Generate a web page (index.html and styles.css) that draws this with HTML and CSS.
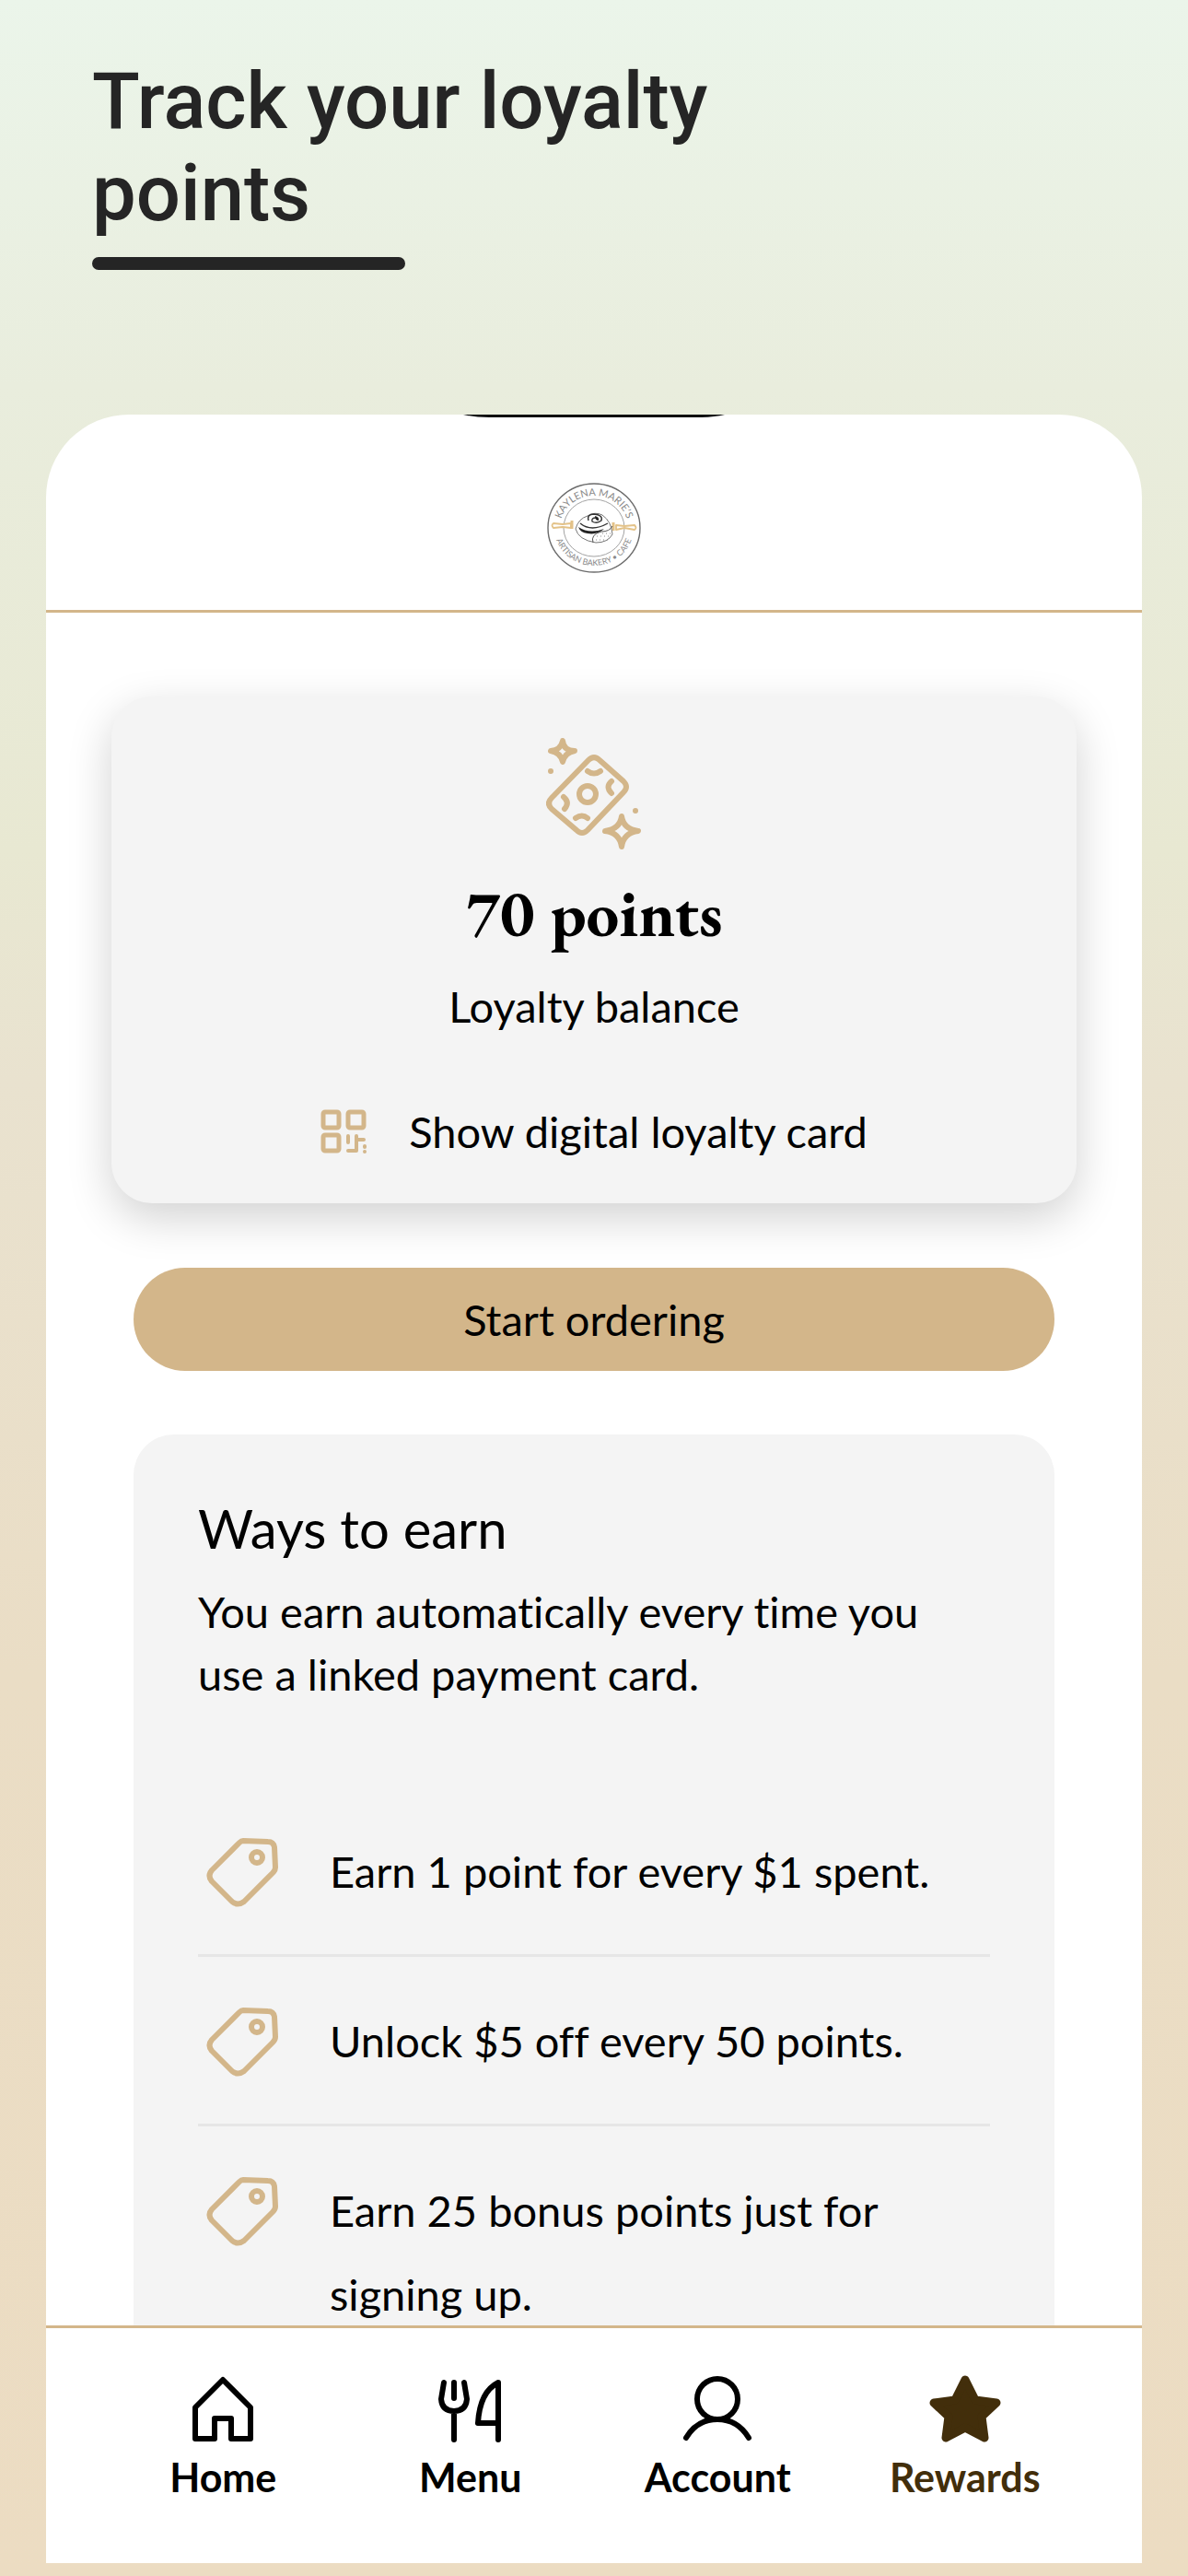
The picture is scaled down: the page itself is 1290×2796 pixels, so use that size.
FILE: index.html
```html
<!DOCTYPE html>
<html lang="en">
<head>
    <meta charset="utf-8" />
    <meta name="viewport" content="width=device-width, initial-scale=1" />
    <title>Track your loyalty points</title>
    <link rel="stylesheet" href="styles.css">
</head>

<body>
    <header class="promo">
        <h1>Track your loyalty<br />points</h1>
        <div class="underline"></div>
    </header>

    <div class="phone">
        <svg class="notch" viewBox="0 0 284 4" aria-hidden="true">
            <path d="M0 0H284Q272 3 256 3H28Q12 3 0 0Z" fill="#0b0c0e" />
        </svg>

        <div class="app-bar">
            <svg class="logo" viewBox="0 0 102 98" role="img" aria-label="Kaylena Marie's Artisan Bakery and Cafe">
                <defs>
                    <path id="arc-top" d="M14 49A37 35 0 0 1 88 49" />
                    <path id="arc-bottom" d="M8 49A43 41 0 0 0 94 49" />
                </defs>
                <ellipse cx="51" cy="49" rx="50" ry="48" fill="none" stroke="#6b6b6b" stroke-width="1.4" />
                <ellipse cx="51" cy="49" rx="33" ry="31" fill="none" stroke="#a3a3a3" />
                <text class="logo-text logo-name"><textPath href="#arc-top" startOffset="50%">KAYLENA MARIE’S</textPath></text>
                <text class="logo-text logo-tag"><textPath href="#arc-bottom" startOffset="50%">ARTISAN BAKERY • CAFE</textPath></text>
                <!-- rolling pin -->
                <g fill="#fff" stroke="#e3c288" stroke-width="1.8" stroke-linejoin="round">
                    <path d="M7 44Q4 46 7 49L17 48L26 49V44L17 45Z" />
                    <path d="M95 46Q98 49 95 51L84 49L75 51V46L84 47Z" />
                    <path d="M27 41V50M72 43V52" stroke-width="3" />
                </g>
                <!-- cinnamon roll -->
                <path d="M31 50Q34 39 44 36Q52 31 60 35Q70 42 71 56Q66 65 53 65Q34 62 31 50Z" fill="#fff" stroke="#777" />
                <path d="M36 44Q48 54 66 44M45 41Q43 34 51 34Q61 35 59 41Q54 45 49 42Q48 38 53 38" fill="none" stroke="#333" stroke-width="1.4" />
                <path d="M34 48Q46 56 62 50Q54 57 44 55Q36 54 34 48ZM52 36Q57 37 56 41Q52 41 52 36Z" fill="#222" />
                <path d="M50 65Q47 56 59 53Q68 53 71 47" fill="none" stroke="#555" />
                <path d="M54 58H69M53 62H66M60 55H70" stroke="#888" stroke-dasharray="1 3" />
            </svg>
        </div>

        <main class="content">
            <section class="balance">
                <svg class="reward-icon" viewBox="0 0 104 124" fill="none" stroke="#d3b68a" stroke-width="6" stroke-linecap="round" stroke-linejoin="round" aria-hidden="true">
                    <path d="M46 25Q52 19 58 25L84 48Q90 54 84 60L45 101Q39 107 33 101L6 78Q0 72 6 66Z" />
                    <circle cx="45" cy="62" r="9" />
                    <path d="M45 37Q52 42 59 37M71 48Q64 54 71 61M19 65Q26 71 20 78M32 88Q39 83 45 88" />
                    <path d="M18 4Q19 15 31 15Q20 17 18 27Q16 17 5 15Q16 14 18 4Z" />
                    <path d="M82 86Q84 100 100 102Q84 104 82 119Q80 104 64 102Q80 100 82 86Z" />
                    <circle cx="5" cy="37" r="3" fill="#d3b68a" stroke="none" />
                    <circle cx="97" cy="80" r="3" fill="#d3b68a" stroke="none" />
                </svg>
                <h2>70 points</h2>
                <p>Loyalty balance</p>
                <button type="button" class="show-card">
                    <svg class="qr-icon" viewBox="0 0 50 48" fill="none" stroke="#d3b68a" stroke-width="5" stroke-linejoin="round" stroke-linecap="round" aria-hidden="true">
                        <rect x="3" y="3" width="17" height="17" rx="2" />
                        <rect x="30" y="3" width="17" height="17" rx="2" />
                        <rect x="3" y="28" width="17" height="17" rx="2" />
                        <path d="M30 29V36M39 29V45H30M39 33H47M48 40V41M48 46V46" stroke-width="4" />
                    </svg>
                    Show digital loyalty card
                </button>
            </section>

            <button type="button" class="order">Start ordering</button>

            <section class="ways">
                <h2>Ways to earn</h2>
                <p>You earn automatically every time you use a linked payment card.</p>
                <ul>
                    <li>
                        <svg class="tag-icon" viewBox="0 0 78 76" aria-hidden="true"><path d="M40 4L67 5Q73 5 74 11L75 33Q75 36 72 39L41 70Q34 75 28 70L6 48Q1 42 6 36L36 6Q38 4 40 4Z" /><circle cx="55" cy="22" r="6" /></svg>
                        <span>Earn 1 point for every $1 spent.</span>
                    </li>
                    <li>
                        <svg class="tag-icon" viewBox="0 0 78 76" aria-hidden="true"><path d="M40 4L67 5Q73 5 74 11L75 33Q75 36 72 39L41 70Q34 75 28 70L6 48Q1 42 6 36L36 6Q38 4 40 4Z" /><circle cx="55" cy="22" r="6" /></svg>
                        <span>Unlock $5 off every 50 points.</span>
                    </li>
                    <li>
                        <svg class="tag-icon" viewBox="0 0 78 76" aria-hidden="true"><path d="M40 4L67 5Q73 5 74 11L75 33Q75 36 72 39L41 70Q34 75 28 70L6 48Q1 42 6 36L36 6Q38 4 40 4Z" /><circle cx="55" cy="22" r="6" /></svg>
                        <span>Earn 25 bonus points just for signing up.</span>
                    </li>
                </ul>
            </section>
        </main>

        <nav class="tabs">
            <a href="#home">
                <svg viewBox="0 0 80 76"><path d="M40 6L10 36V70H31V48H49V70H70V36Z" /></svg>
                Home
            </a>
            <a href="#menu">
                <svg viewBox="0 0 80 76"><path d="M11 9L8 27Q9 40 22 40Q35 40 36 27L33 9M22 9V26M22 40V71M70 71V9Q50 19 48 53H70" /></svg>
                Menu
            </a>
            <a href="#account">
                <svg viewBox="0 0 80 76"><circle cx="40" cy="27" r="22" /><path d="M6 69Q18 49 40 49Q62 49 74 69" /></svg>
                Account
            </a>
            <a href="#rewards" class="active">
                <svg viewBox="0 0 80 76"><path d="M40 6L51 28L74 31L58 46L61 69L40 58L19 69L22 46L6 31L29 28Z" /></svg>
                Rewards
            </a>
        </nav>
    </div>
</body>
</html>
```
FILE: styles.css
```css
* {
    box-sizing: border-box;
    margin: 0;
    padding: 0;
}

body {
    display: flex;
    flex-direction: column;
    height: 100vh;
    padding: 0 50px 14px;
    background: linear-gradient(#ebf5ea, #e9eddd 15%, #e8e8d2 33%, #e9e2cf 42%, #eaddc5 65%, #ecdcc2);
    font-family: Lato, sans-serif;
    font-size: 47px;
    font-variant-ligatures: none;
    color: #000;
}

button {
    border: none;
    background: none;
    font: inherit;
    font-variant-ligatures: none;
    color: inherit;
    cursor: pointer;
}

.promo {
    height: 450px;
    padding: 60px 50px 0;
    flex: none;
}

.promo h1 {
    font: 500 85px/100px Roboto, sans-serif;
    color: #252525;
}

.underline {
    width: 340px;
    height: 14px;
    margin-top: 19px;
    border-radius: 7px;
    background: #252525;
}

.phone {
    flex: 1;
    min-height: 0;
    display: flex;
    flex-direction: column;
    position: relative;
    overflow: hidden;
    border-radius: 90px 90px 0 0;
    background: #fff;
}

.notch {
    position: absolute;
    top: 0;
    left: 50%;
    width: 284px;
    transform: translateX(-50%);
}

.app-bar {
    flex: none;
    display: flex;
    justify-content: center;
    padding: 74px 0 40px;
    border-bottom: 3px solid #d3b68a;
}

.logo {
    width: 102px;
    height: 98px;
}

.logo-text {
    font-family: Lato, sans-serif;
    text-anchor: middle;
    fill: #8a8a8a;
}

.logo-name {
    font-size: 11px;
}

.logo-tag {
    font-size: 9px;
}

.content {
    flex: 1;
    min-height: 0;
    overflow: hidden;
    padding: 91px 95px 0;
}

.balance {
    display: flex;
    flex-direction: column;
    align-items: center;
    margin: 0 -24px;
    padding: 44px 0;
    border-radius: 44px;
    background: #f4f4f4;
    box-shadow: 0 16px 48px rgba(0, 0, 0, 0.18);
}

.reward-icon {
    width: 104px;
    height: 124px;
}

.balance h2 {
    margin-top: 22px;
    font: bold 71px/90px "EB Garamond", "Liberation Serif", serif;
}

.balance p {
    margin-top: 22px;
    line-height: 68px;
}

.show-card {
    display: flex;
    align-items: center;
    gap: 46px;
    margin-top: 68px;
    line-height: 68px;
}

.qr-icon {
    width: 50px;
    height: 48px;
}

.order {
    display: block;
    width: 100%;
    height: 112px;
    margin: 70px 0 69px;
    border-radius: 56px;
    background: #d3b68a;
}

.ways {
    padding: 67px 70px;
    border-radius: 44px;
    background: #f4f4f4;
}

.ways h2 {
    font-size: 58px;
    font-weight: 400;
    line-height: 70px;
}

.ways p {
    margin-top: 21px;
    line-height: 68px;
}

.ways ul {
    margin-top: 89px;
    list-style: none;
}

.ways li {
    display: flex;
    align-items: flex-start;
    gap: 56px;
    padding: 46px 0 44px;
    border-bottom: 3px solid #e6e6e6;
    line-height: 91px;
}

.ways li:last-child {
    border-bottom: none;
}

.tag-icon {
    flex: none;
    width: 78px;
    height: 76px;
    margin: 8px 0 0 9px;
    fill: none;
    stroke: #d3b68a;
    stroke-width: 6;
    stroke-linejoin: round;
}

.tabs {
    flex: none;
    display: flex;
    height: 258px;
    padding: 50px 58px 0;
    border-top: 3px solid #d3b68a;
    background: #fff;
}

.tabs a {
    flex: 1;
    display: flex;
    flex-direction: column;
    align-items: center;
    font-size: 43px;
    font-weight: bold;
    line-height: 48px;
    color: #000;
    text-decoration: none;
}

.tabs svg {
    width: 80px;
    height: 76px;
    margin-bottom: 12px;
    fill: none;
    stroke: currentColor;
    stroke-width: 6;
    stroke-linecap: round;
    stroke-linejoin: round;
}

.tabs .active {
    color: #422e0b;
}

.tabs .active svg {
    fill: currentColor;
    stroke-width: 9;
}
```
